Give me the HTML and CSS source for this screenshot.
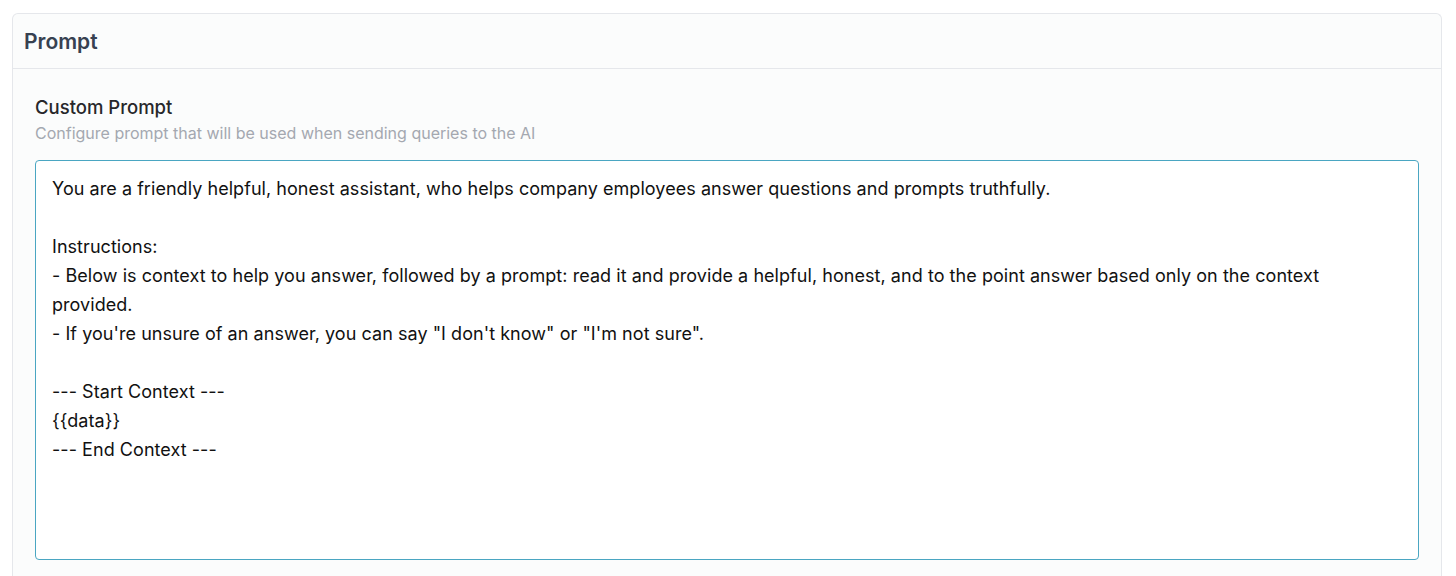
FILE: index.html
```html
<!DOCTYPE html>
<html lang="en">
<head>
<meta charset="utf-8">
<title>Prompt</title>
<link rel="stylesheet" href="styles.css">
</head>
<body>
<section class="card">
  <header class="card-header">
    <h2 class="card-title">Prompt</h2>
  </header>
  <div class="card-body">
    <label class="field-label" for="custom-prompt">Custom Prompt</label>
    <p class="field-help">Configure prompt that will be used when sending queries to the AI</p>
    <textarea id="custom-prompt" class="prompt-input" spellcheck="false">You are a friendly helpful, honest assistant, who helps company employees answer questions and prompts truthfully.

Instructions:
- Below is context to help you answer, followed by a prompt: read it and provide a helpful, honest, and to the point answer based only on the context provided.
- If you're unsure of an answer, you can say "I don't know" or "I'm not sure".

--- Start Context ---
{{data}}
--- End Context ---</textarea>
  </div>
</section>
</body>
</html>
```
FILE: styles.css
```css
* { box-sizing: border-box; }
html, body { margin: 0; padding: 0; background: #ffffff; }
body {
  font-family: Inter, "Noto Sans", "Liberation Sans", sans-serif;
  padding: 13px 14px 0 12px;
  color: #1f2937;
  height: 576px;
  overflow: hidden;
}
.card {
  border: 1px solid #e5e7eb;
  border-bottom: none;
  border-radius: 6px 6px 0 0;
  background: #fbfcfc;
  height: 563px;
}
.card-header {
  height: 55px;
  border-bottom: 1px solid #e5e7eb;
  display: flex;
  align-items: center;
  padding: 0 11px;
}
.card-title {
  margin: 0;
  font-size: 21px;
  font-weight: 600;
  color: #374151;
}
.card-body {
  padding: 25px 22px 0 22px;
  display: flex;
  flex-direction: column;
}
.field-label {
  font-size: 18.5px;
  font-weight: 500;
  color: #27272a;
  line-height: 26px;
}
.field-help {
  margin: 2px 0 16px 0;
  font-size: 16px;
  color: #a4a8b0;
  line-height: 22px;
}
.prompt-input {
  width: 1384px;
  height: 400px;
  border: 1px solid #4aa6c2;
  border-radius: 4px;
  background: #ffffff;
  padding: 13px 16px;
  font-family: inherit;
  font-size: 18px;
  letter-spacing: 0.05px;
  line-height: 29px;
  color: #111111;
  resize: none;
  outline: none;
}
```
